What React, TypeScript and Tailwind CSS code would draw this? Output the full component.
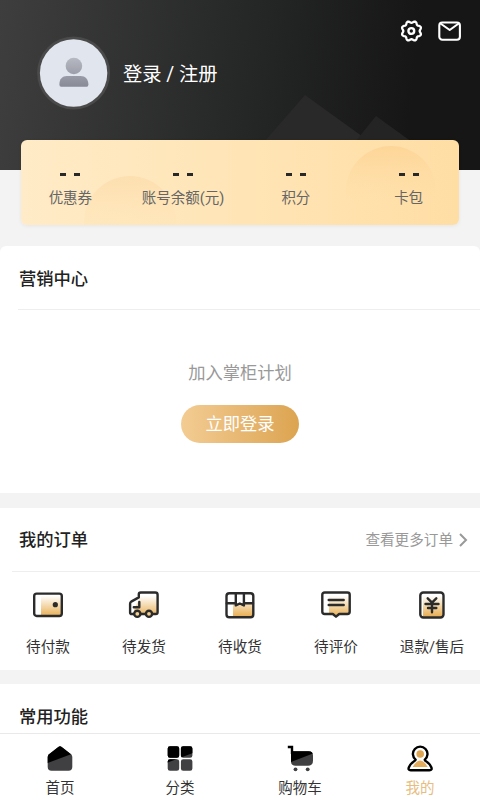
import React from "react";

const gear = Array.from({ length: 96 }, (_, i) => {
  const t = (i / 96) * Math.PI * 2;
  const r = 9.1 - 0.95 * Math.cos(8 * t);
  return `${i ? "L" : "M"}${(11.5 + r * Math.cos(t)).toFixed(2)} ${(12 + r * Math.sin(t)).toFixed(2)}`;
}).join("") + "Z";

const GearIcon = () => (
  <svg width="24" height="24" viewBox="0 0 24 24" fill="none" stroke="#fff" strokeWidth="2.3" strokeLinejoin="round">
    <path d={gear} />
    <circle cx="11.3" cy="12" r="2.9" strokeWidth="2.4" />
  </svg>
);

const MailIcon = () => (
  <svg width="24" height="24" viewBox="0 0 24 24" fill="none" stroke="#fff" strokeWidth="2.1" strokeLinecap="round" strokeLinejoin="round">
    <rect x="1.3" y="3.5" width="20.6" height="17.2" rx="3" />
    <path d="M3.2 5L11.7 11L20 5" />
  </svg>
);

const Avatar = () => (
  <svg width="74" height="74" viewBox="0 0 74 74">
    <defs>
      <linearGradient id="person" x1="0" y1="20" x2="0" y2="50" gradientUnits="userSpaceOnUse">
        <stop stopColor="#b9bbc5" />
        <stop offset="1" stopColor="#898b97" />
      </linearGradient>
    </defs>
    <circle cx="36.6" cy="37" r="36.5" fill="#4a4a4a" />
    <circle cx="36.6" cy="37" r="33.7" fill="#e1e5ed" />
    <circle cx="36.9" cy="30" r="8.3" fill="url(#person)" />
    <path d="M22.4 48.4C22.4 43 25.5 40 29.7 40H43.7C48.2 40 51.4 43.5 51.4 48.4Q51.4 50.8 49.7 50.8H24.2Q22.4 50.8 22.4 48.4Z" fill="url(#person)" />
  </svg>
);

const Stroke = ({ children }: { children: React.ReactNode }) => (
  <svg width="32" height="32" viewBox="0 0 32 32" fill="none" stroke="#2b2b2b" strokeWidth="2.4" strokeLinecap="round" strokeLinejoin="round">
    <defs>
      <linearGradient id="gold" x1="0" y1="4" x2="0" y2="28" gradientUnits="userSpaceOnUse">
        <stop offset="0.15" stopColor="#fff" />
        <stop offset="1" stopColor="#e8b056" />
      </linearGradient>
    </defs>
    {children}
  </svg>
);

const orders = [
  {
    label: "待付款",
    icon: (
      <Stroke>
        <path d="M9 6H29V28H9Z" fill="url(#gold)" stroke="none" />
        <rect x="2.2" y="5.6" width="27.6" height="22.4" rx="2.5" />
        <circle cx="23.3" cy="16.7" r="2.6" fill="#2b2b2b" stroke="none" />
      </Stroke>
    ),
  },
  {
    label: "待发货",
    icon: (
      <Stroke>
        <path d="M11 11V5H29V26H6V22Z" fill="url(#gold)" stroke="none" />
        <path d="M5.5 26H3.8Q2.1 26 2.1 24.4V15.8Q2.1 14.4 3.2 13.6L10.8 9.4V6.2Q10.8 4.5 12.7 4.5H27.2Q29.6 4.5 29.6 6.7V24.3Q29.6 26 27.8 26H24.4M12.6 26H18" />
        <path d="M5.8 19.3H11.3V14" />
        <circle cx="9.3" cy="25.8" r="3.1" fill="#f5d093" />
        <circle cx="21" cy="25.8" r="3.1" fill="#f5d093" />
      </Stroke>
    ),
  },
  {
    label: "待收货",
    icon: (
      <Stroke>
        <path d="M9 15H29V28H9Z" fill="url(#gold)" stroke="none" />
        <rect x="2.5" y="5.3" width="26.8" height="24" rx="2.8" />
        <path d="M2.8 15.2H11.6M20.1 15.2H29M11.8 5.5V17.4L15.8 15.5L19.9 17.4V5.5" />
      </Stroke>
    ),
  },
  {
    label: "待评价",
    icon: (
      <Stroke>
        <path d="M9 5H29V25H20L16 29L12 25H9Z" fill="url(#gold)" stroke="none" />
        <path d="M4.7 4.5H27.4Q29.7 4.5 29.7 6.7V23.8Q29.7 26 27.4 26H19.2L16 28.7L12.8 26H4.7Q2.3 26 2.3 23.8V6.7Q2.3 4.5 4.7 4.5Z" />
        <path d="M8.7 12H23.7M8.7 17H23.7" />
      </Stroke>
    ),
  },
  {
    label: "退款/售后",
    icon: (
      <Stroke>
        <path d="M7 5H27V29H7Z" fill="url(#gold)" stroke="none" />
        <rect x="4.3" y="4.5" width="23.2" height="25" rx="3" />
        <path d="M11.7 10.3L16 14.6L20.3 10.3M9.5 16H22.5M12 20H20.3M16 14.6V24.3" />
      </Stroke>
    ),
  },
];

const HomeIcon = () => (
  <svg width="28" height="28" viewBox="0 0 28 28">
    <clipPath id="house"><path d="M12.3 2Q14 .7 15.7 2L25 9.2Q26.3 10.4 26.3 12V22Q26.3 25.7 22.5 25.7H5.5Q1.7 25.7 1.7 22V12Q1.7 10.4 3 9.2Z" /></clipPath>
    <g clipPath="url(#house)"><path fill="#404042" d="M0 0H28V28H0Z" /><path d="M0 0H28V8L0 18.5Z" /></g>
  </svg>
);

const GridIcon = () => (
  <svg width="28" height="28" viewBox="0 0 28 28">
    <clipPath id="tiles">
      <rect x="1.7" y="1.2" width="11.5" height="11.5" rx="2.3" />
      <rect x="14.9" y="1.2" width="11.5" height="11.5" rx="2.3" />
      <rect x="1.7" y="14.2" width="11.5" height="11.5" rx="2.3" />
      <rect x="14.9" y="14.2" width="11.5" height="11.5" rx="2.3" />
    </clipPath>
    <g clipPath="url(#tiles)"><path fill="#404042" d="M0 0H28V28H0Z" /><path d="M0 0H28V7.5L0 18Z" /></g>
  </svg>
);

const CartIcon = () => (
  <svg width="28" height="28" viewBox="0 0 28 28">
    <clipPath id="basket"><path d="M5 6.2H22.5Q27 6.2 27 10.5V15.5Q27 20.8 22 20.8H9.5Q5 20.8 5 16.3Z" /></clipPath>
    <g clipPath="url(#basket)"><path fill="#404042" d="M0 0H28V28H0Z" /><path d="M0 0H28V8L0 19Z" /></g>
    <path d="M1.8 2H6V9" fill="none" stroke="#000" strokeWidth="2.4" />
    <circle cx="9.5" cy="24.3" r="1.9" fill="#404042" />
    <circle cx="21.7" cy="24.3" r="1.9" fill="#404042" />
  </svg>
);

const UserIcon = () => (
  <svg width="28" height="28" viewBox="0 0 28 28">
    <path d="M9.6 14.6A7.3 7.3 0 1 1 18.8 14.6Q18.6 15.5 20 16.2Q23.6 18.4 25.3 22.2Q26.5 25.2 23.5 25.2H4.7Q1.7 25.2 2.9 22.2Q4.6 18.4 8.2 16.2Q9.8 15.5 9.6 14.6Z" fill="#fff" stroke="#000" strokeWidth="2.4" strokeLinejoin="round" />
    <circle cx="14.2" cy="9" r="3.8" fill="#dda552" />
    <path d="M6.7 22Q8.3 18.5 11.7 16.2Q14 15 16.7 16.2Q20.1 18.5 21.7 22Z" fill="#e2ac5c" />
  </svg>
);

const tabs = [
  { label: "首页", icon: <HomeIcon /> },
  { label: "分类", icon: <GridIcon /> },
  { label: "购物车", icon: <CartIcon /> },
  { label: "我的", icon: <UserIcon />, active: true },
];

const stats = ["优惠券", "账号余额(元)", "积分", "卡包"];

const Heading = ({ children }: { children: React.ReactNode }) => (
  <h2 className="text-[17.3px] leading-6 font-medium text-[#222]">{children}</h2>
);

export default function App() {
  return (
    <div className="flex h-[800px] w-[480px] flex-col overflow-hidden bg-[#f3f3f3] font-[Roboto,'Noto_Sans_CJK_SC',sans-serif] whitespace-nowrap">
      <header className="relative h-[170px] shrink-0 bg-linear-[96deg] from-[#3d3e3d] from-0% via-[#242525] via-54% to-[#161616] to-85%">
        <svg className="absolute top-0 left-0" width="480" height="170">
          <path d="M264 142L305 95L370 142Z" fill="#292929" />
          <path d="M355 142L376 116L412 142Z" fill="#242424" />
        </svg>
        <div className="relative flex items-start pt-9 pl-[37px]">
          <Avatar />
          <div className="mt-[25px] ml-3 text-[19.3px] leading-7 text-white">登录 / 注册</div>
          <div className="-mt-[17px] ml-auto flex gap-[14px] pr-[18px]">
            <GearIcon />
            <MailIcon />
          </div>
        </div>
      </header>

      <section className="relative -mt-[30px] ml-[21px] h-[85px] w-[438px] shrink-0 overflow-hidden rounded-md bg-linear-to-r from-[#ffebc7] to-[#ffdea4] shadow-[0_1px_4px_rgba(0,0,0,0.06)]">
        <svg className="absolute top-0 left-0" width="438" height="85">
          <defs>
            <linearGradient id="sun1" x1="0" y1="0" x2="0" y2="1">
              <stop stopColor="#fddfb0" /><stop offset=".6" stopColor="#ffe5b8" stopOpacity=".3" />
            </linearGradient>
            <linearGradient id="sun2" x1="0" y1="0" x2="0" y2="1">
              <stop stopColor="#fdd598" /><stop offset=".65" stopColor="#ffdfa8" stopOpacity="0" />
            </linearGradient>
          </defs>
          <circle cx="109" cy="82" r="46" fill="url(#sun1)" />
          <circle cx="370" cy="51" r="45" fill="url(#sun2)" />
        </svg>
        <div className="relative -ml-[7px] grid w-[451px] grid-cols-4 pt-[33px]">
          {stats.map((s) => (
            <div key={s} className="flex flex-col items-center">
              <div className="flex gap-2">
                <i className="h-[3px] w-[6px] bg-[#282828]" />
                <i className="h-[3px] w-[6px] bg-[#282828]" />
              </div>
              <div className="mt-[12px] text-[14.5px] leading-[22px] text-[#666]">{s}</div>
            </div>
          ))}
        </div>
      </section>

      <section className="mt-[21px] h-[247px] shrink-0 rounded-t-md bg-white">
        <div className="ml-[18px] h-16 border-b border-[#eee] pt-[21px] pl-px"><Heading>营销中心</Heading></div>
        <div className="flex flex-col items-center pt-[51px]">
          <p className="text-[17.3px] leading-6 text-[#999]">加入掌柜计划</p>
          <button className="mt-[20px] h-[38px] w-[118px] rounded-full bg-linear-to-r from-[#f3cc93] to-[#dca450] pt-[2px] text-[17.3px] text-white">立即登录</button>
        </div>
      </section>

      <section className="mt-[15px] h-[162px] shrink-0 bg-white">
        <div className="ml-3 flex h-16 items-center border-b border-[#eee] pr-3 pl-[7px]">
          <div className="pt-px"><Heading>我的订单</Heading></div>
          <span className="ml-auto pt-[2px] text-[14.6px] text-[#999]">查看更多订单</span>
          <svg className="ml-[6px]" width="9" height="16" viewBox="0 0 9 16" fill="none" stroke="#999" strokeWidth="2"><path d="M1 2L7 8L1 14" /></svg>
        </div>
        <div className="grid grid-cols-5 pt-4">
          {orders.map((o) => (
            <div key={o.label} className="flex flex-col items-center">
              {o.icon}
              <span className="mt-[16px] text-[14.6px] leading-[22px] text-[#333]">{o.label}</span>
            </div>
          ))}
        </div>
      </section>

      <section className="mt-[14px] h-[49px] shrink-0 bg-white pt-[21px] pl-[19px]"><Heading>常用功能</Heading></section>

      <nav className="grid h-[67px] shrink-0 grid-cols-4 border-t border-[#e9e9e9] bg-white pt-[11px]">
        {tabs.map((t) => (
          <div key={t.label} className="flex flex-col items-center">
            {t.icon}
            <span className={`mt-[5px] text-[14.5px] leading-[22px] ${t.active ? "text-[#e7bd80]" : "text-[#333]"}`}>{t.label}</span>
          </div>
        ))}
      </nav>
    </div>
  );
}
